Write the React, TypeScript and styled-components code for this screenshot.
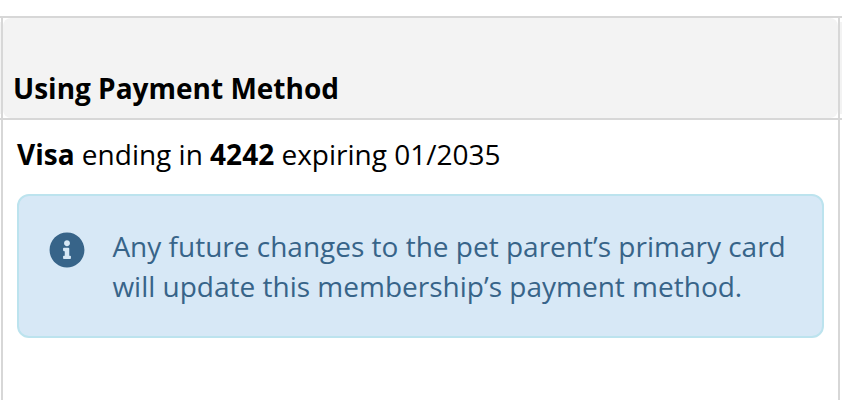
import React from "react";
import styled, { createGlobalStyle } from "styled-components";
import { FaInfoCircle } from "react-icons/fa";

const GlobalStyle = createGlobalStyle`
  body { margin: 0; background: #fff; overflow: hidden; }
  * { box-sizing: border-box; }
`;

const Table = styled.main`
  display: grid;
  grid-template-columns: 1px 839px 2px;
  grid-template-rows: 104px 280px;
  margin-top: 16px;
  font-family: "Open Sans", sans-serif;
  color: #000;
`;
const HeaderCell = styled.div<{ $edge?: boolean }>`
  border: solid #d7d7d7;
  border-width: ${({ $edge }) => ($edge ? "2px 0" : "2px")};
  background: #fff;
`;
const HeaderFill = styled.div<{ $edge?: boolean }>`
  height: ${({ $edge }) => ($edge ? "92px" : "100%")};
  margin: ${({ $edge }) => ($edge ? "4px 0" : "0")};
  padding: ${({ $edge }) => ($edge ? "0" : "50px 10px 0")};
  border-radius: ${({ $edge }) => ($edge ? "0" : "8px")};
  background: #f3f3f3;
`;
const Title = styled.h2`
  margin: 0;
  font-size: 28px;
  line-height: 40px;
  font-weight: 700;
  white-space: nowrap;
`;
const Body = styled.section`
  grid-column: 2;
  padding: 14px 14px 0;
  border: solid #d7d7d7;
  border-width: 0 2px;
`;
const CardLine = styled.p`
  margin: 0 0 20px;
  font-size: 28px;
  line-height: 40px;
  white-space: nowrap;
`;
const Notice = styled.div`
  display: flex;
  gap: 27.4px;
  height: 144px;
  padding: 30px;
  border: 2px solid #bce3ee;
  border-radius: 12px;
  background: #d7e8f6;
  color: #376489;
`;
const NoticeIcon = styled(FaInfoCircle)`
  flex: none;
  width: 36px;
  height: 36px;
  margin-top: 6px;
`;
const NoticeText = styled.p`
  margin: 0;
  font-size: 28px;
  line-height: 40px;
  white-space: nowrap;
`;

export default function App() {
  return (
    <>
      <GlobalStyle />
      <Table>
        <HeaderCell $edge><HeaderFill $edge /></HeaderCell>
        <HeaderCell>
          <HeaderFill><Title>Using Payment Method</Title></HeaderFill>
        </HeaderCell>
        <HeaderCell $edge><HeaderFill $edge /></HeaderCell>
        <Body>
          <CardLine><b>Visa</b> ending in <b>4242</b> expiring 01/2035</CardLine>
          <Notice>
            <NoticeIcon />
            <NoticeText>
              Any future changes to the pet parent’s primary card<br />
              will update this membership’s payment method.
            </NoticeText>
          </Notice>
        </Body>
      </Table>
    </>
  );
}
